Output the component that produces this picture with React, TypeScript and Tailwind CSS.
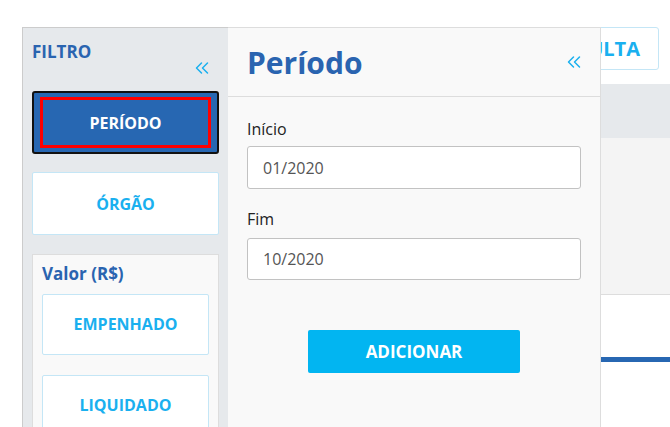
import React from 'react';

function DoubleChevron({ className = '' }: { className?: string }) {
  return (
    <svg className={className} viewBox="0 0 14 14" fill="none" stroke="currentColor" strokeWidth={1.5} strokeLinecap="round" strokeLinejoin="round">
      <polyline points="6.5,2 1.5,7 6.5,12" />
      <polyline points="12.5,2 7.5,7 12.5,12" />
    </svg>
  );
}

function FilterButton({ label, tall = false }: { label: string; tall?: boolean }) {
  return (
    <button className={`flex w-full shrink-0 items-center justify-center rounded-[2px] border border-[#c4e6f6] bg-white text-[16px] font-bold text-[#1ab0ef] ${tall ? 'h-[63px]' : 'h-[61px]'}`}>
      {label}
    </button>
  );
}

export default function App() {
  return (
    <div className="relative h-[427px] w-[670px] overflow-hidden bg-white font-['Open_Sans',sans-serif]">

      {/* ── BACKGROUND PAGE ── */}
      <div className="ml-[40px]">
        <div className="flex h-[84px] items-start justify-end pr-[11px] pt-[27px]">
          <button className="h-[43px] rounded-[3px] border border-[#c4e6f6] bg-white pl-[19px] pr-[18px] text-[20px] font-bold text-[#1ab0ef]">
            CONSULTA
          </button>
        </div>
        <div className="h-[54px] bg-[#e6e9ec]" />
        <div className="h-[157px] border-b border-[#dddddd] bg-[#f4f4f4]" />
        <div className="h-[62px]" />
        <div className="h-[5px] bg-[#2767b2]" />
      </div>

      {/* ── FILTER DRAWER ── */}
      <div className="absolute bottom-0 left-[22px] top-[27px] flex">

        {/* Filter column */}
        <div className="flex w-[206px] flex-col overflow-hidden border-l border-t border-[#cccccc] bg-[#e6e9ec] px-[9px]">
          <div className="flex h-[63px] shrink-0 justify-between pr-[10px]">
            <span className="pt-[11px] text-[17px] font-bold text-[#2a64b0]">FILTRO</span>
            <DoubleChevron className="mt-[33px] h-[14px] w-[14px] text-[#1ab0ef]" />
          </div>

          <button className="h-[63px] w-full shrink-0 rounded-[3px] border-2 border-[#111111] bg-[#2767b2] px-[6px] py-[4px]">
            <span className="flex h-full w-full items-center justify-center border-[3px] border-[#ff0000] text-[16px] font-bold text-white">
              PERÍODO
            </span>
          </button>

          <div className="mt-[18px] shrink-0">
            <FilterButton label="ÓRGÃO" tall />
          </div>

          <div className="mt-[19px] flex shrink-0 flex-col gap-[20px] border border-b-0 border-[#dddddd] bg-[#f9f9f9] px-[9px] pt-[6px]">
            <div className="-mb-[13px] text-[17px] font-bold text-[#2a64b0]">Valor (R$)</div>
            <FilterButton label="EMPENHADO" />
            <FilterButton label="LIQUIDADO" />
          </div>
        </div>

        {/* Period panel */}
        <div className="flex w-[373px] flex-col border-r border-t border-[#dddddd] bg-[#f9f9f9]">
          <div className="flex h-[69px] shrink-0 items-center justify-between border-b border-[#dddddd] pl-[19px] pr-[19px]">
            <h2 className="text-[30px] font-bold text-[#2a64b0]">Período</h2>
            <DoubleChevron className="h-[14px] w-[14px] text-[#1ab0ef]" />
          </div>

          <div className="flex flex-col px-[19px] pt-[20px]">
            <label className="text-[16px] leading-[24px] text-[#222222]">Início</label>
            <div className="mt-[5px] flex h-[43px] items-center rounded-[3px] border border-[#c2c2c2] bg-white px-[15px] text-[16px] text-[#555555]">
              01/2020
            </div>

            <label className="mt-[18px] text-[16px] leading-[24px] text-[#222222]">Fim</label>
            <div className="mt-[7px] flex h-[42px] items-center rounded-[3px] border border-[#c2c2c2] bg-white px-[15px] text-[16px] text-[#555555]">
              10/2020
            </div>

            <button className="mx-auto mt-[50px] h-[43px] w-[212px] rounded-[2px] bg-[#02b5f1] text-[17px] font-bold text-white">
              ADICIONAR
            </button>
          </div>
        </div>

      </div>
    </div>
  );
}
